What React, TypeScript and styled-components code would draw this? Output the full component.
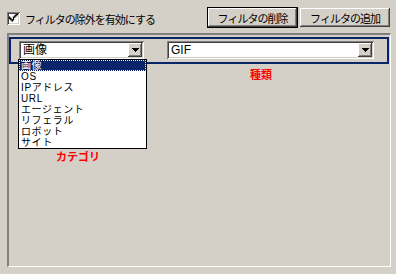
import React from 'react';
import styled, { createGlobalStyle, css } from 'styled-components';

const GlobalStyle = createGlobalStyle`
    html, body {
        margin: 0;
        padding: 0;
    }
    body {
        background: #d4d0c8;
        font-family: "Liberation Sans", "Noto Sans CJK JP", sans-serif;
        font-size: 11px;
        color: #000;
    }
`;

const raised = css`
    box-shadow: inset -1px -1px #404040, inset 1px 1px #ffffff,
        inset -2px -2px #808080, inset 2px 2px #d4d0c8;
`;

const sunken = css`
    box-shadow: inset 1px 1px #808080, inset -1px -1px #ffffff,
        inset 2px 2px #404040, inset -2px -2px #d4d0c8;
`;

const Window = styled.div`
    width: 396px;
    height: 274px;
    box-sizing: border-box;
    padding: 8px 5px 7px 7px;
    display: flex;
    flex-direction: column;
`;

const TopBar = styled.div`
    display: flex;
    align-items: center;
    height: 19px;
    gap: 3px;
    margin-right: 1px;
    margin-bottom: 6px;
`;

const CheckLabel = styled.label`
    flex: 1;
    display: flex;
    align-items: center;
    gap: 5px;
    letter-spacing: -1px;
    padding-top: 2px;
`;

const CheckBox = styled.span`
    width: 13px;
    height: 13px;
    box-sizing: border-box;
    background: #fff;
    ${sunken};
    display: flex;
    align-items: center;
    justify-content: center;
`;

const Button = styled.button<{ $default?: boolean }>`
    height: 19px;
    width: ${({ $default }) => ($default ? '89px' : '90px')};
    padding: 0;
    background: #d4d0c8;
    border: none;
    font-family: inherit;
    font-size: 11px;
    letter-spacing: -1px;
    color: #000;
    ${raised};
    ${({ $default }) => $default && css`
        outline: 1px solid #000;
        box-shadow: inset -1px -1px #404040, inset 1px 1px #ffffff,
            inset -2px -2px #808080;
    `}
`;

const Panel = styled.div`
    flex: 1;
    border-top: 2px solid #808080;
    border-left: 2px solid #808080;
    border-right: 1px solid #fff;
    border-bottom: 1px solid #fff;
    padding-top: 2px;
`;

const Frame = styled.div`
    height: 27px;
    box-sizing: border-box;
    border: 2px solid #0a246a;
    margin-right: 1px;
    display: grid;
    grid-template-columns: 125px 207px;
    column-gap: 23px;
    padding: 2px 0 0 8px;
`;

const LabelRow = styled.div`
    display: grid;
    grid-template-columns: 125px 207px;
    column-gap: 23px;
    padding-left: 10px;
`;

const Caption = styled.div<{ $top: number; $shift: number }>`
    margin-top: ${({ $top }) => $top}px;
    padding-left: ${({ $shift }) => $shift}px;
    color: #ff0000;
    font-weight: bold;
    font-size: 11px;
    line-height: 12px;
`;

const Combo = styled.div`
    position: relative;
    height: 18px;
    box-sizing: border-box;
    background: #fff;
    ${sunken};
    display: flex;
    align-items: center;
    padding: 2px;
`;

const ComboText = styled.span`
    flex: 1;
    padding-left: 2px;
    font-size: 12px;
    line-height: 14px;
`;

const DropButton = styled.span`
    width: 14px;
    height: 14px;
    box-sizing: border-box;
    background: #d4d0c8;
    ${raised};
    display: flex;
    align-items: center;
    justify-content: center;
`;

const List = styled.ul`
    position: absolute;
    top: 100%;
    left: -1px;
    width: 129px;
    margin: 0;
    padding: 0;
    list-style: none;
    box-sizing: border-box;
    border: 1px solid #000;
    background: #fff;
    z-index: 5;
`;

const Item = styled.li<{ $selected?: boolean }>`
    height: 11px;
    line-height: 11px;
    font-size: 10px;
    letter-spacing: 0.6px;
    padding-left: 2px;
    white-space: nowrap;
    overflow: hidden;
    ${({ $selected }) => $selected && css`
        background: #0a246a;
        color: #fff;
        outline: 1px dotted #fff8c0;
        outline-offset: -1px;
    `}
`;

const Arrow = () => (
    <svg width="7" height="4" viewBox="0 0 7 4">
        <path d="M0 0h7v1H0zM1 1h5v1H1zM2 2h3v1H2zM3 3h1v1H3z" fill="#000" />
    </svg>
);

const Check = () => (
    <svg width="9" height="9" viewBox="0 0 7 7">
        <path d="M0 2h1v1H0zM0 3h2v1H0zM1 4h2v1H1zM2 5h1v1H2zM3 2h1v3H3zM4 1h1v2H4zM5 0h1v2H5zM6 0h1v1H6z" fill="#000" />
    </svg>
);

const categories = ['画像', 'OS', 'IPアドレス', 'URL', 'エージェント', 'リフェラル', 'ロボット', 'サイト'];

const App: React.FC = () => {
    return (
        <>
            <GlobalStyle />
            <Window>
                <TopBar>
                    <CheckLabel>
                        <CheckBox><Check /></CheckBox>
                        フィルタの除外を有効にする
                    </CheckLabel>
                    <Button $default>フィルタの削除</Button>
                    <Button>フィルタの追加</Button>
                </TopBar>
                <Panel>
                    <Frame>
                        <Combo>
                            <ComboText>画像</ComboText>
                            <DropButton><Arrow /></DropButton>
                            <List>
                                {categories.map((c, i) => (
                                    <Item key={c} $selected={i === 0}>{c}</Item>
                                ))}
                            </List>
                        </Combo>
                        <Combo>
                            <ComboText>GIF</ComboText>
                            <DropButton><Arrow /></DropButton>
                        </Combo>
                    </Frame>
                    <LabelRow>
                        <Caption $top={87} $shift={37}>カテゴリ</Caption>
                        <Caption $top={5} $shift={83}>種類</Caption>
                    </LabelRow>
                </Panel>
            </Window>
        </>
    );
};

export default App;
